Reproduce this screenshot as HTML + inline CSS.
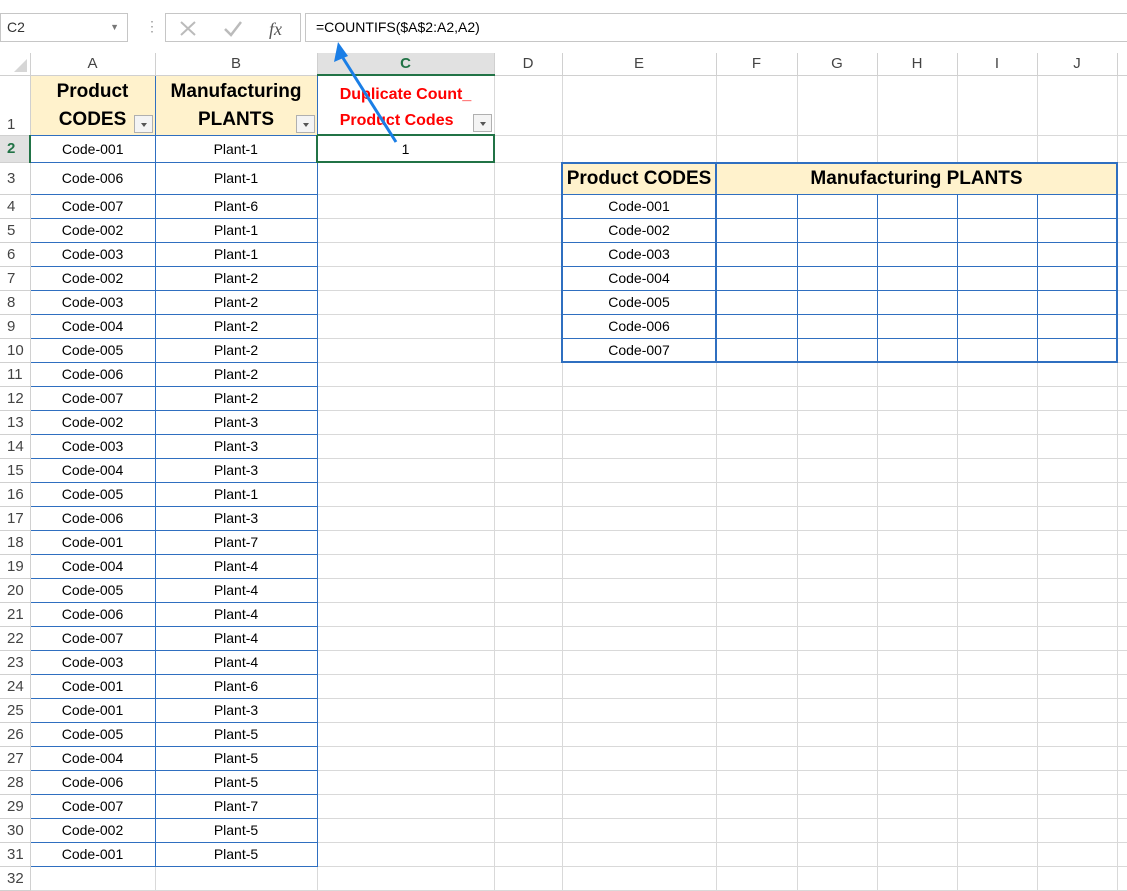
<!DOCTYPE html>
<html><head><style>
*{box-sizing:border-box;margin:0;padding:0}
body{width:1127px;height:875px;overflow:hidden;background:#fff;font-family:"Liberation Sans",Calibri,sans-serif;position:relative}
.top{position:absolute;left:0;top:0;width:1127px;height:52px;background:#fff}
.nb{position:absolute;left:0;top:13px;width:128px;height:29px;border:1px solid #c6c6c6;font-size:14px;line-height:27px;padding-left:6px;color:#333}
.fb{position:absolute;left:305px;top:13px;width:830px;height:29px;border:1px solid #c6c6c6;font-size:14px;line-height:27px;padding-left:10px;color:#000}
.ib{position:absolute;left:165px;top:13px;width:136px;height:29px;border:1px solid #c6c6c6}
table{position:absolute;left:0;top:53px;border-collapse:collapse;table-layout:fixed;width:1137px}
td{border:1px solid #d9d9d9;font-size:14px;text-align:center;white-space:nowrap;overflow:hidden;padding:0}
tr.h td{background:#fff;color:#444;font-size:15px;height:22px;border-color:#d0d0d0;border-top:none}
td.rh{color:#444;text-align:left;padding-left:7px;font-size:15px;border-color:#d0d0d0;border-left:none}
td.a,td.b{border:1px solid #2f6fc0}
td.y{background:#fff2cc;font-weight:bold;font-size:19px;line-height:28px;position:relative;vertical-align:top;padding-top:2px}
.dd{position:absolute;right:2px;bottom:2px;width:19px;height:18px;border:1px solid #b0b0b0;background:#f4f4f4}
.dd:after{content:"";position:absolute;left:6px;top:7px;border-left:3px solid transparent;border-right:3px solid transparent;border-top:4px solid #555}
.rt{position:absolute;left:561px;top:162px;border-collapse:collapse;border:2px solid #2f6fc0;width:556px}
.rt tr{height:24px}
.rt td{border:1px solid #2f6fc0;font-size:14px;line-height:18px}
</style></head><body>
<div class="top">
<div class="nb">C2<span style="position:absolute;right:8px;top:0;font-size:9px;color:#777">▼</span></div>
<div style="position:absolute;left:145px;top:18px;color:#999;font-size:14px">⋮</div>
<div class="ib">
<svg width="136" height="29" style="position:absolute;left:0;top:0"><path d="M15 8 L29 21 M29 8 L15 21" stroke="#bbb" stroke-width="2"/><path d="M59 15 L65 21 L75 8" stroke="#bbb" stroke-width="2.5" fill="none"/><text x="103" y="21" font-family="Liberation Serif" font-style="italic" font-size="18" fill="#555">fx</text></svg>
</div>
<div class="fb">=COUNTIFS($A$2:A2,A2)</div>
</div>
<table>
<colgroup><col style="width:30px"><col style="width:125px"><col style="width:162px"><col style="width:177px"><col style="width:68px"><col style="width:154px"><col style="width:81px"><col style="width:80px"><col style="width:80px"><col style="width:80px"><col style="width:80px"><col style="width:20px"></colgroup>
<tr class="h"><td style="background:#fff;position:relative;border-left:none"><div style="position:absolute;right:3px;bottom:3px;border-left:13px solid transparent;border-bottom:13px solid #d6d6d6"></div></td><td>A</td><td>B</td><td style="background:#e1e1e1;color:#217346;font-weight:bold;border-bottom:2px solid #217346">C</td><td>D</td><td>E</td><td>F</td><td>G</td><td>H</td><td>I</td><td>J</td><td></td></tr>
<tr style="height:60px"><td class="rh" style="vertical-align:bottom;padding-bottom:2px">1</td><td class="a y">Product<br>CODES<div class="dd"></div></td><td class="b y">Manufacturing<br>PLANTS<div class="dd"></div></td><td style="position:relative;color:#f00;font-weight:bold;font-size:16px;line-height:26px;vertical-align:top;padding-top:6px">Duplicate Count_<br>Product Codes&nbsp;&nbsp;&nbsp;&nbsp;<div class="dd"></div></td><td></td><td></td><td></td><td></td><td></td><td></td><td></td><td></td></tr>
<tr style="height:27px"><td class="rh" style="background:#e1e1e1;color:#217346;font-weight:bold;border-right:2px solid #217346">2</td><td class="a">Code-001</td><td class="b">Plant-1</td><td style="border:2px solid #217346">1</td><td></td><td></td><td></td><td></td><td></td><td></td><td></td><td></td></tr>
<tr style="height:32px"><td class="rh">3</td><td class="a">Code-006</td><td class="b">Plant-1</td><td></td><td></td><td></td><td></td><td></td><td></td><td></td><td></td><td></td></tr>
<tr style="height:24px"><td class="rh">4</td><td class="a">Code-007</td><td class="b">Plant-6</td><td></td><td></td><td></td><td></td><td></td><td></td><td></td><td></td><td></td></tr>
<tr style="height:24px"><td class="rh">5</td><td class="a">Code-002</td><td class="b">Plant-1</td><td></td><td></td><td></td><td></td><td></td><td></td><td></td><td></td><td></td></tr>
<tr style="height:24px"><td class="rh">6</td><td class="a">Code-003</td><td class="b">Plant-1</td><td></td><td></td><td></td><td></td><td></td><td></td><td></td><td></td><td></td></tr>
<tr style="height:24px"><td class="rh">7</td><td class="a">Code-002</td><td class="b">Plant-2</td><td></td><td></td><td></td><td></td><td></td><td></td><td></td><td></td><td></td></tr>
<tr style="height:24px"><td class="rh">8</td><td class="a">Code-003</td><td class="b">Plant-2</td><td></td><td></td><td></td><td></td><td></td><td></td><td></td><td></td><td></td></tr>
<tr style="height:24px"><td class="rh">9</td><td class="a">Code-004</td><td class="b">Plant-2</td><td></td><td></td><td></td><td></td><td></td><td></td><td></td><td></td><td></td></tr>
<tr style="height:24px"><td class="rh">10</td><td class="a">Code-005</td><td class="b">Plant-2</td><td></td><td></td><td></td><td></td><td></td><td></td><td></td><td></td><td></td></tr>
<tr style="height:24px"><td class="rh">11</td><td class="a">Code-006</td><td class="b">Plant-2</td><td></td><td></td><td></td><td></td><td></td><td></td><td></td><td></td><td></td></tr>
<tr style="height:24px"><td class="rh">12</td><td class="a">Code-007</td><td class="b">Plant-2</td><td></td><td></td><td></td><td></td><td></td><td></td><td></td><td></td><td></td></tr>
<tr style="height:24px"><td class="rh">13</td><td class="a">Code-002</td><td class="b">Plant-3</td><td></td><td></td><td></td><td></td><td></td><td></td><td></td><td></td><td></td></tr>
<tr style="height:24px"><td class="rh">14</td><td class="a">Code-003</td><td class="b">Plant-3</td><td></td><td></td><td></td><td></td><td></td><td></td><td></td><td></td><td></td></tr>
<tr style="height:24px"><td class="rh">15</td><td class="a">Code-004</td><td class="b">Plant-3</td><td></td><td></td><td></td><td></td><td></td><td></td><td></td><td></td><td></td></tr>
<tr style="height:24px"><td class="rh">16</td><td class="a">Code-005</td><td class="b">Plant-1</td><td></td><td></td><td></td><td></td><td></td><td></td><td></td><td></td><td></td></tr>
<tr style="height:24px"><td class="rh">17</td><td class="a">Code-006</td><td class="b">Plant-3</td><td></td><td></td><td></td><td></td><td></td><td></td><td></td><td></td><td></td></tr>
<tr style="height:24px"><td class="rh">18</td><td class="a">Code-001</td><td class="b">Plant-7</td><td></td><td></td><td></td><td></td><td></td><td></td><td></td><td></td><td></td></tr>
<tr style="height:24px"><td class="rh">19</td><td class="a">Code-004</td><td class="b">Plant-4</td><td></td><td></td><td></td><td></td><td></td><td></td><td></td><td></td><td></td></tr>
<tr style="height:24px"><td class="rh">20</td><td class="a">Code-005</td><td class="b">Plant-4</td><td></td><td></td><td></td><td></td><td></td><td></td><td></td><td></td><td></td></tr>
<tr style="height:24px"><td class="rh">21</td><td class="a">Code-006</td><td class="b">Plant-4</td><td></td><td></td><td></td><td></td><td></td><td></td><td></td><td></td><td></td></tr>
<tr style="height:24px"><td class="rh">22</td><td class="a">Code-007</td><td class="b">Plant-4</td><td></td><td></td><td></td><td></td><td></td><td></td><td></td><td></td><td></td></tr>
<tr style="height:24px"><td class="rh">23</td><td class="a">Code-003</td><td class="b">Plant-4</td><td></td><td></td><td></td><td></td><td></td><td></td><td></td><td></td><td></td></tr>
<tr style="height:24px"><td class="rh">24</td><td class="a">Code-001</td><td class="b">Plant-6</td><td></td><td></td><td></td><td></td><td></td><td></td><td></td><td></td><td></td></tr>
<tr style="height:24px"><td class="rh">25</td><td class="a">Code-001</td><td class="b">Plant-3</td><td></td><td></td><td></td><td></td><td></td><td></td><td></td><td></td><td></td></tr>
<tr style="height:24px"><td class="rh">26</td><td class="a">Code-005</td><td class="b">Plant-5</td><td></td><td></td><td></td><td></td><td></td><td></td><td></td><td></td><td></td></tr>
<tr style="height:24px"><td class="rh">27</td><td class="a">Code-004</td><td class="b">Plant-5</td><td></td><td></td><td></td><td></td><td></td><td></td><td></td><td></td><td></td></tr>
<tr style="height:24px"><td class="rh">28</td><td class="a">Code-006</td><td class="b">Plant-5</td><td></td><td></td><td></td><td></td><td></td><td></td><td></td><td></td><td></td></tr>
<tr style="height:24px"><td class="rh">29</td><td class="a">Code-007</td><td class="b">Plant-7</td><td></td><td></td><td></td><td></td><td></td><td></td><td></td><td></td><td></td></tr>
<tr style="height:24px"><td class="rh">30</td><td class="a">Code-002</td><td class="b">Plant-5</td><td></td><td></td><td></td><td></td><td></td><td></td><td></td><td></td><td></td></tr>
<tr style="height:24px"><td class="rh">31</td><td class="a">Code-001</td><td class="b">Plant-5</td><td></td><td></td><td></td><td></td><td></td><td></td><td></td><td></td><td></td></tr>
<tr style="height:24px"><td class="rh">32</td><td></td><td></td><td></td><td></td><td></td><td></td><td></td><td></td><td></td><td></td><td></td></tr>
</table>
<table class="rt">
<colgroup><col style="width:154px"><col style="width:81px"><col style="width:80px"><col style="width:80px"><col style="width:80px"><col style="width:80px"></colgroup>
<tr style="height:31px"><td style="background:#fff2cc;font-weight:bold;font-size:19px;line-height:24px;border-right:2px solid #2f6fc0">Product CODES</td><td colspan="5" style="background:#fff2cc;font-weight:bold;font-size:19px;line-height:24px">Manufacturing PLANTS</td></tr>
<tr><td style="border-right:2px solid #2f6fc0">Code-001</td><td></td><td></td><td></td><td></td><td></td></tr>
<tr><td style="border-right:2px solid #2f6fc0">Code-002</td><td></td><td></td><td></td><td></td><td></td></tr>
<tr><td style="border-right:2px solid #2f6fc0">Code-003</td><td></td><td></td><td></td><td></td><td></td></tr>
<tr><td style="border-right:2px solid #2f6fc0">Code-004</td><td></td><td></td><td></td><td></td><td></td></tr>
<tr><td style="border-right:2px solid #2f6fc0">Code-005</td><td></td><td></td><td></td><td></td><td></td></tr>
<tr><td style="border-right:2px solid #2f6fc0">Code-006</td><td></td><td></td><td></td><td></td><td></td></tr>
<tr><td style="border-right:2px solid #2f6fc0">Code-007</td><td></td><td></td><td></td><td></td><td></td></tr>
</table>
<svg width="1127" height="875" style="position:absolute;left:0;top:0;pointer-events:none">
<line x1="396" y1="142" x2="343" y2="58" stroke="#1a7ee6" stroke-width="3"/>
<path d="M338 42 L334 62 L348 56 Z" fill="#1a7ee6"/>
</svg>
</body></html>
